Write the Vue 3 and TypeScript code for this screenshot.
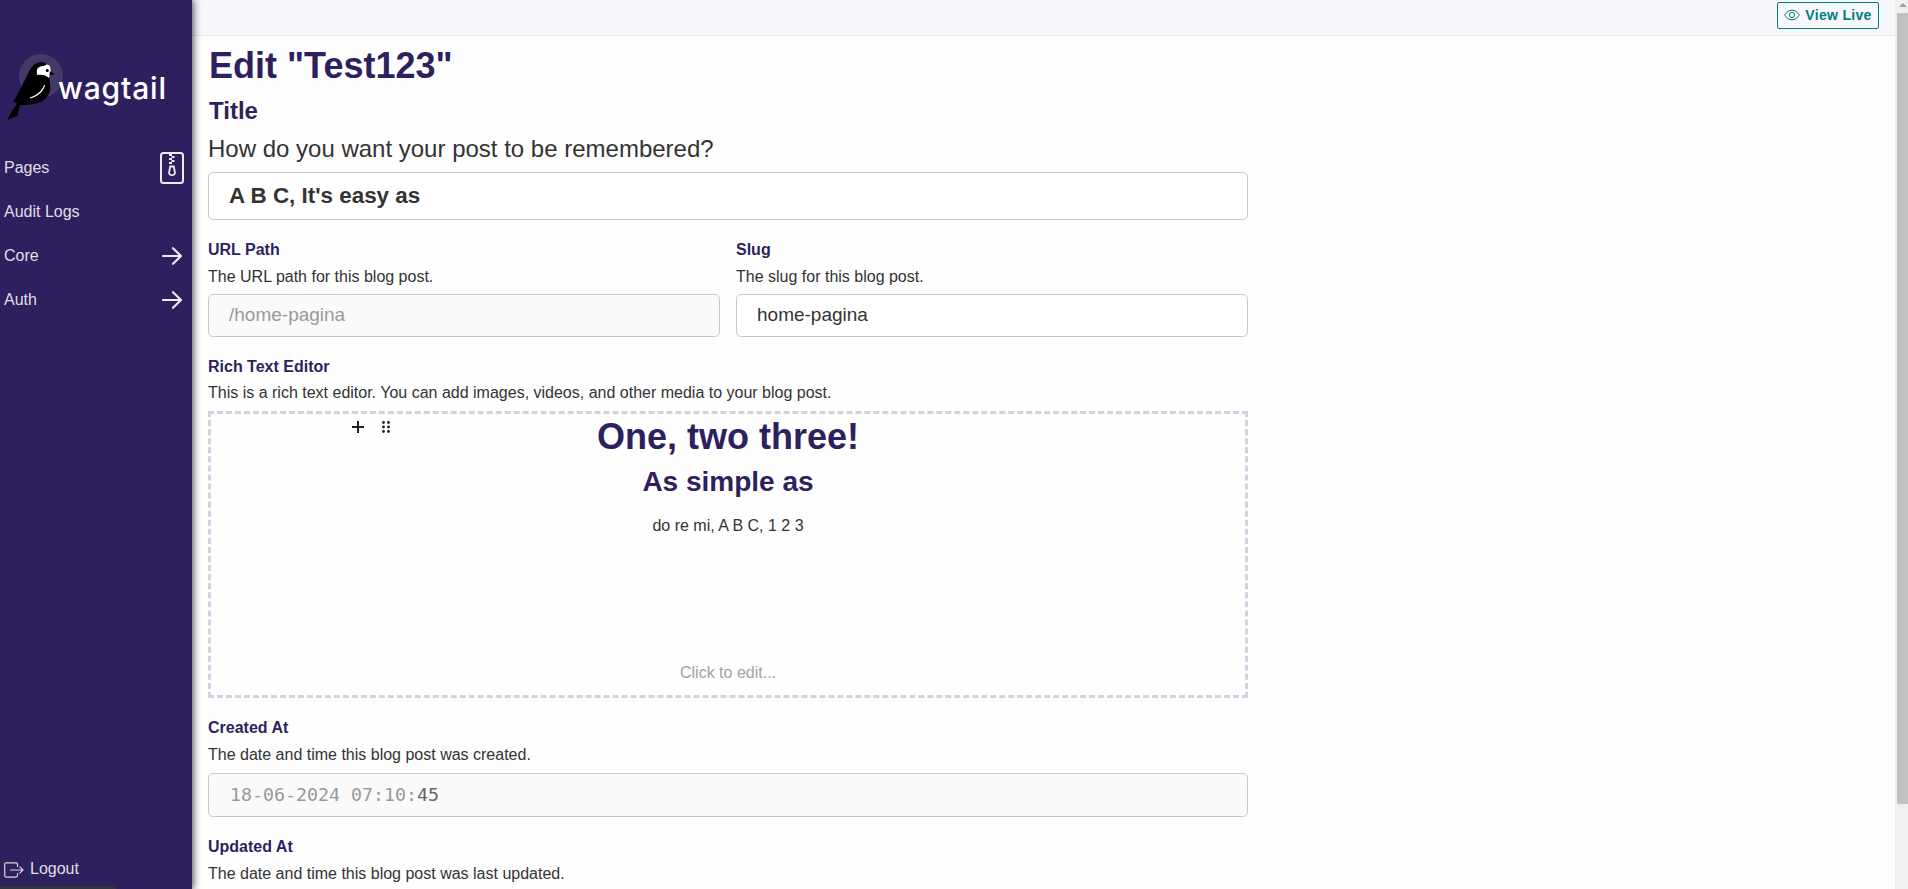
<script setup lang="ts">
interface NavItem {
  label: string
  icon?: 'zip' | 'arrow'
}

const navItems: NavItem[] = [
  { label: 'Pages', icon: 'zip' },
  { label: 'Audit Logs' },
  { label: 'Core', icon: 'arrow' },
  { label: 'Auth', icon: 'arrow' },
]
</script>

<template>
  <div class="app">
    <aside class="sidebar">
      <svg class="logo" width="192" height="90" viewBox="0 0 192 90">
        <circle cx="41" cy="36" r="22" fill="#463869" />
        <path d="M13 62C18 54 22 45 27 36C30 29 33 22.500 41 22C46 22 49 26 51 30C50 35 49 37 50 43C52 56 44 62 34 64C29 65 24 65 20 65L17.500 76L8 79.500C9 74 15 68 17 63Z" fill="#000" />
        <path d="M37 34C36 28 39 26 44 26C46 24 48 24 50 26C50 28 51 30 51 32C49 34 50 36 49 38C46 35 42 34 37 35Z" fill="#fff" />
        <circle cx="47.3" cy="30.5" r="1.5" fill="#000" />
        <path d="M50 31L55 34.5L49.5 35Z" fill="#000" />
        <path d="M30 58C38 56 43 52 44.500 45C43 50 38 55 30 58Z" fill="#fff" stroke="#fff" stroke-width="0.8" />
        <text class="wordmark" x="58" y="59.300" textLength="108" lengthAdjust="spacing">wagtail</text>
      </svg>

      <nav class="nav">
        <a v-for="item in navItems" :key="item.label" class="nav-item">
          <span>{{ item.label }}</span>
          <svg v-if="item.icon === 'zip'" class="zip" width="24" height="32" viewBox="0 0 24 32" fill="none" stroke="#ececf0">
            <rect x="1" y="1" width="22" height="30" rx="2.500" stroke-width="2" />
            <path d="M10.500 2v2M13 4v2M10.500 6v2M13 8v2M10.500 10v2" stroke-width="3" />
            <path d="M10.300 14.500h3.400l1.200 5.500c.4 2-1 3.200-2.900 3.200s-3.300-1.200-2.900-3.200z" stroke-width="1.800" />
          </svg>
          <svg v-else-if="item.icon === 'arrow'" class="arrow" width="20" height="18" viewBox="0 0 20 18" fill="none" stroke="#ececf0" stroke-width="2.200" stroke-linecap="round" stroke-linejoin="round">
            <path d="M1 9h18M11 1.200l8 7.800-8 7.800" />
          </svg>
        </a>
      </nav>

      <a class="logout">
        <svg width="20" height="16" viewBox="0 0 20 16" fill="none" stroke="#d9d7e2" stroke-width="1.200" stroke-linecap="round" stroke-linejoin="round">
          <path d="M13.500 4.500V2.200Q13.500.8 12 .8H2.200Q.7.800.7 2.200v11.400q0 1.500 1.500 1.500H12q1.500 0 1.500-1.500v-2.200M6.500 8H19M15.800 4.800L19 8l-3.200 3.200" />
        </svg>
        <span>Logout</span>
      </a>
      <div class="status"></div>
    </aside>

    <div class="page">
      <header class="topbar">
        <a class="view-live">
          <svg width="16" height="12" viewBox="0 0 16 12" fill="none" stroke="#007d7e">
            <path d="M.6 6Q3.500 1 8 1t7.400 5Q12.500 11 8 11T.6 6z" />
            <circle cx="8" cy="6" r="2.600" />
          </svg>
          <span>View Live</span>
        </a>
      </header>

      <main class="form">
        <h1 class="heading">Edit "Test123"</h1>

        <section class="field title-field">
          <label>Title</label>
          <p>How do you want your post to be remembered?</p>
          <div class="input">A B C, It's easy as</div>
        </section>

        <div class="columns">
          <section class="field">
            <label>URL Path</label>
            <p>The URL path for this blog post.</p>
            <div class="input disabled">/home-pagina</div>
          </section>
          <section class="field">
            <label>Slug</label>
            <p>The slug for this blog post.</p>
            <div class="input">home-pagina</div>
          </section>
        </div>

        <section class="field rich">
          <label>Rich Text Editor</label>
          <p>This is a rich text editor. You can add images, videos, and other media to your blog post.</p>
          <div class="editor">
            <svg class="tools" width="40" height="14" viewBox="0 0 40 14">
              <path d="M7 1v12M1 7h12" fill="none" stroke="#1d202b" stroke-width="2" />
              <g fill="#1d202b">
                <circle cx="32.500" cy="2.500" r="1.400" /><circle cx="37.500" cy="2.500" r="1.400" />
                <circle cx="32.500" cy="7" r="1.400" /><circle cx="37.500" cy="7" r="1.400" />
                <circle cx="32.500" cy="11.500" r="1.400" /><circle cx="37.500" cy="11.500" r="1.400" />
              </g>
            </svg>
            <h1>One, two three!</h1>
            <h2>As simple as</h2>
            <div class="para">do re mi, A B C, 1 2 3</div>
            <div class="hint">Click to edit...</div>
          </div>
        </section>

        <section class="field date">
          <label>Created At</label>
          <p>The date and time this blog post was created.</p>
          <div class="input disabled mono">18-06-2024 07:10:<span class="seconds">45</span></div>
        </section>

        <section class="field">
          <label>Updated At</label>
          <p>The date and time this blog post was last updated.</p>
        </section>
      </main>
    </div>

    <div class="scrollbar">
      <div class="scroll-up"></div>
      <div class="thumb"></div>
    </div>
  </div>
</template>

<style>
body {
  margin: 0;
  overflow: hidden;
}
</style>

<style scoped>
* {
  box-sizing: border-box;
}
.app {
  display: flex;
  width: 100%;
  height: 889px;
  overflow: hidden;
  background: #fefefe;
  color: #333;
  font: 16px/20px "Liberation Sans", Arial, sans-serif;
}
.sidebar {
  position: relative;
  z-index: 1;
  display: flex;
  flex-direction: column;
  flex: 0 0 192px;
  padding-top: 40px;
  background: #2e1f5e;
  color: #e1dfe6;
  box-shadow: 0 0 8px 1px rgba(0, 0, 0, 0.75);
}
.logo {
  display: block;
}
.wordmark {
  font-family: Inter, sans-serif;
  font-size: 30px;
  font-weight: 500;
  fill: #fff;
}
.nav {
  margin-top: 16px;
}
.nav-item {
  display: flex;
  align-items: center;
  justify-content: space-between;
  height: 44px;
  padding: 0 8px 0 4px;
}
.nav-item .arrow {
  margin-right: 2px;
}
.logout {
  display: flex;
  align-items: center;
  gap: 6px;
  margin-top: auto;
  padding: 0 0 5px 4px;
  height: 29px;
}
.logout svg {
  position: relative;
  top: 1px;
}
.status {
  width: 116px;
  height: 3px;
  background: #2e353b;
  border-top-right-radius: 3px;
}
.page {
  flex: 1;
  min-width: 0;
}
.topbar {
  display: flex;
  justify-content: flex-end;
  height: 36px;
  padding: 2px 16px 0 0;
  background: #f7f8fb;
  border-bottom: 1px solid #e5e7ea;
}
.view-live {
  display: flex;
  align-items: center;
  justify-content: center;
  gap: 5px;
  width: 102px;
  height: 27px;
  padding-bottom: 2px;
  border: 1px solid #007d7e;
  border-radius: 2px;
  color: #007d7e;
  font-size: 14px;
  font-weight: 700;
  letter-spacing: 0.3px;
}
.form {
  width: 1056px;
  padding: 7px 0 0 16px;
}
h1,
h2,
p {
  margin: 0;
}
h1,
h2,
label {
  color: #2e1f5e;
  font-weight: 700;
}
h1 {
  font-size: 36px;
  line-height: 46px;
}
.heading {
  padding-left: 1px;
}
label {
  display: block;
}
.field p {
  margin: 7px 0;
}
.title-field {
  margin: 7px 0 20px;
}
.title-field label {
  padding-left: 1px;
  font-size: 24px;
  line-height: 30px;
}
.title-field p {
  margin: 7px 0;
  font-size: 24px;
  line-height: 32px;
}
.input {
  display: flex;
  align-items: center;
  height: 43px;
  padding: 0 20px;
  background: #fff;
  border: 1px solid #c8c8c8;
  border-radius: 5px;
  font-size: 19px;
}
.title-field .input {
  height: 48px;
  font-size: 22.4px;
  font-weight: 700;
}
.columns .input {
  padding-bottom: 1px;
}
.disabled {
  background: #fafafa;
  color: #999;
}
.columns {
  display: grid;
  grid-template-columns: 1fr 1fr;
  gap: 16px;
  margin-bottom: 20px;
}
.rich p {
  margin: 6px 0 8px;
}
.editor {
  position: relative;
  height: 287px;
  border: 3px dashed #d3d0df;
  text-align: center;
}
.tools {
  position: absolute;
  left: 140px;
  top: 6px;
}
.editor h2 {
  font-size: 28px;
  line-height: 36px;
  margin-top: 4px;
}
.para {
  margin-top: 16px;
}
.hint {
  margin-top: 127px;
  color: #a2a2a2;
}
.date {
  margin: 20px 0;
}
.date p {
  margin-bottom: 8px;
}
.mono {
  height: 44px;
  padding-left: 21px;
  font-family: "DejaVu Sans Mono", monospace;
  font-size: 18.300px;
}
.seconds {
  color: #666;
}
.scrollbar {
  flex: 0 0 13px;
  padding-left: 2px;
  background: #f0f0f0;
}
.scroll-up {
  width: 0;
  height: 4px;
  margin: 3px 0 6px 2px;
  border: 4px solid transparent;
  border-top-width: 0;
  border-bottom: 4px solid #a0a0a0;
}
.thumb {
  height: 791px;
  background: #c1c1c1;
}
</style>
